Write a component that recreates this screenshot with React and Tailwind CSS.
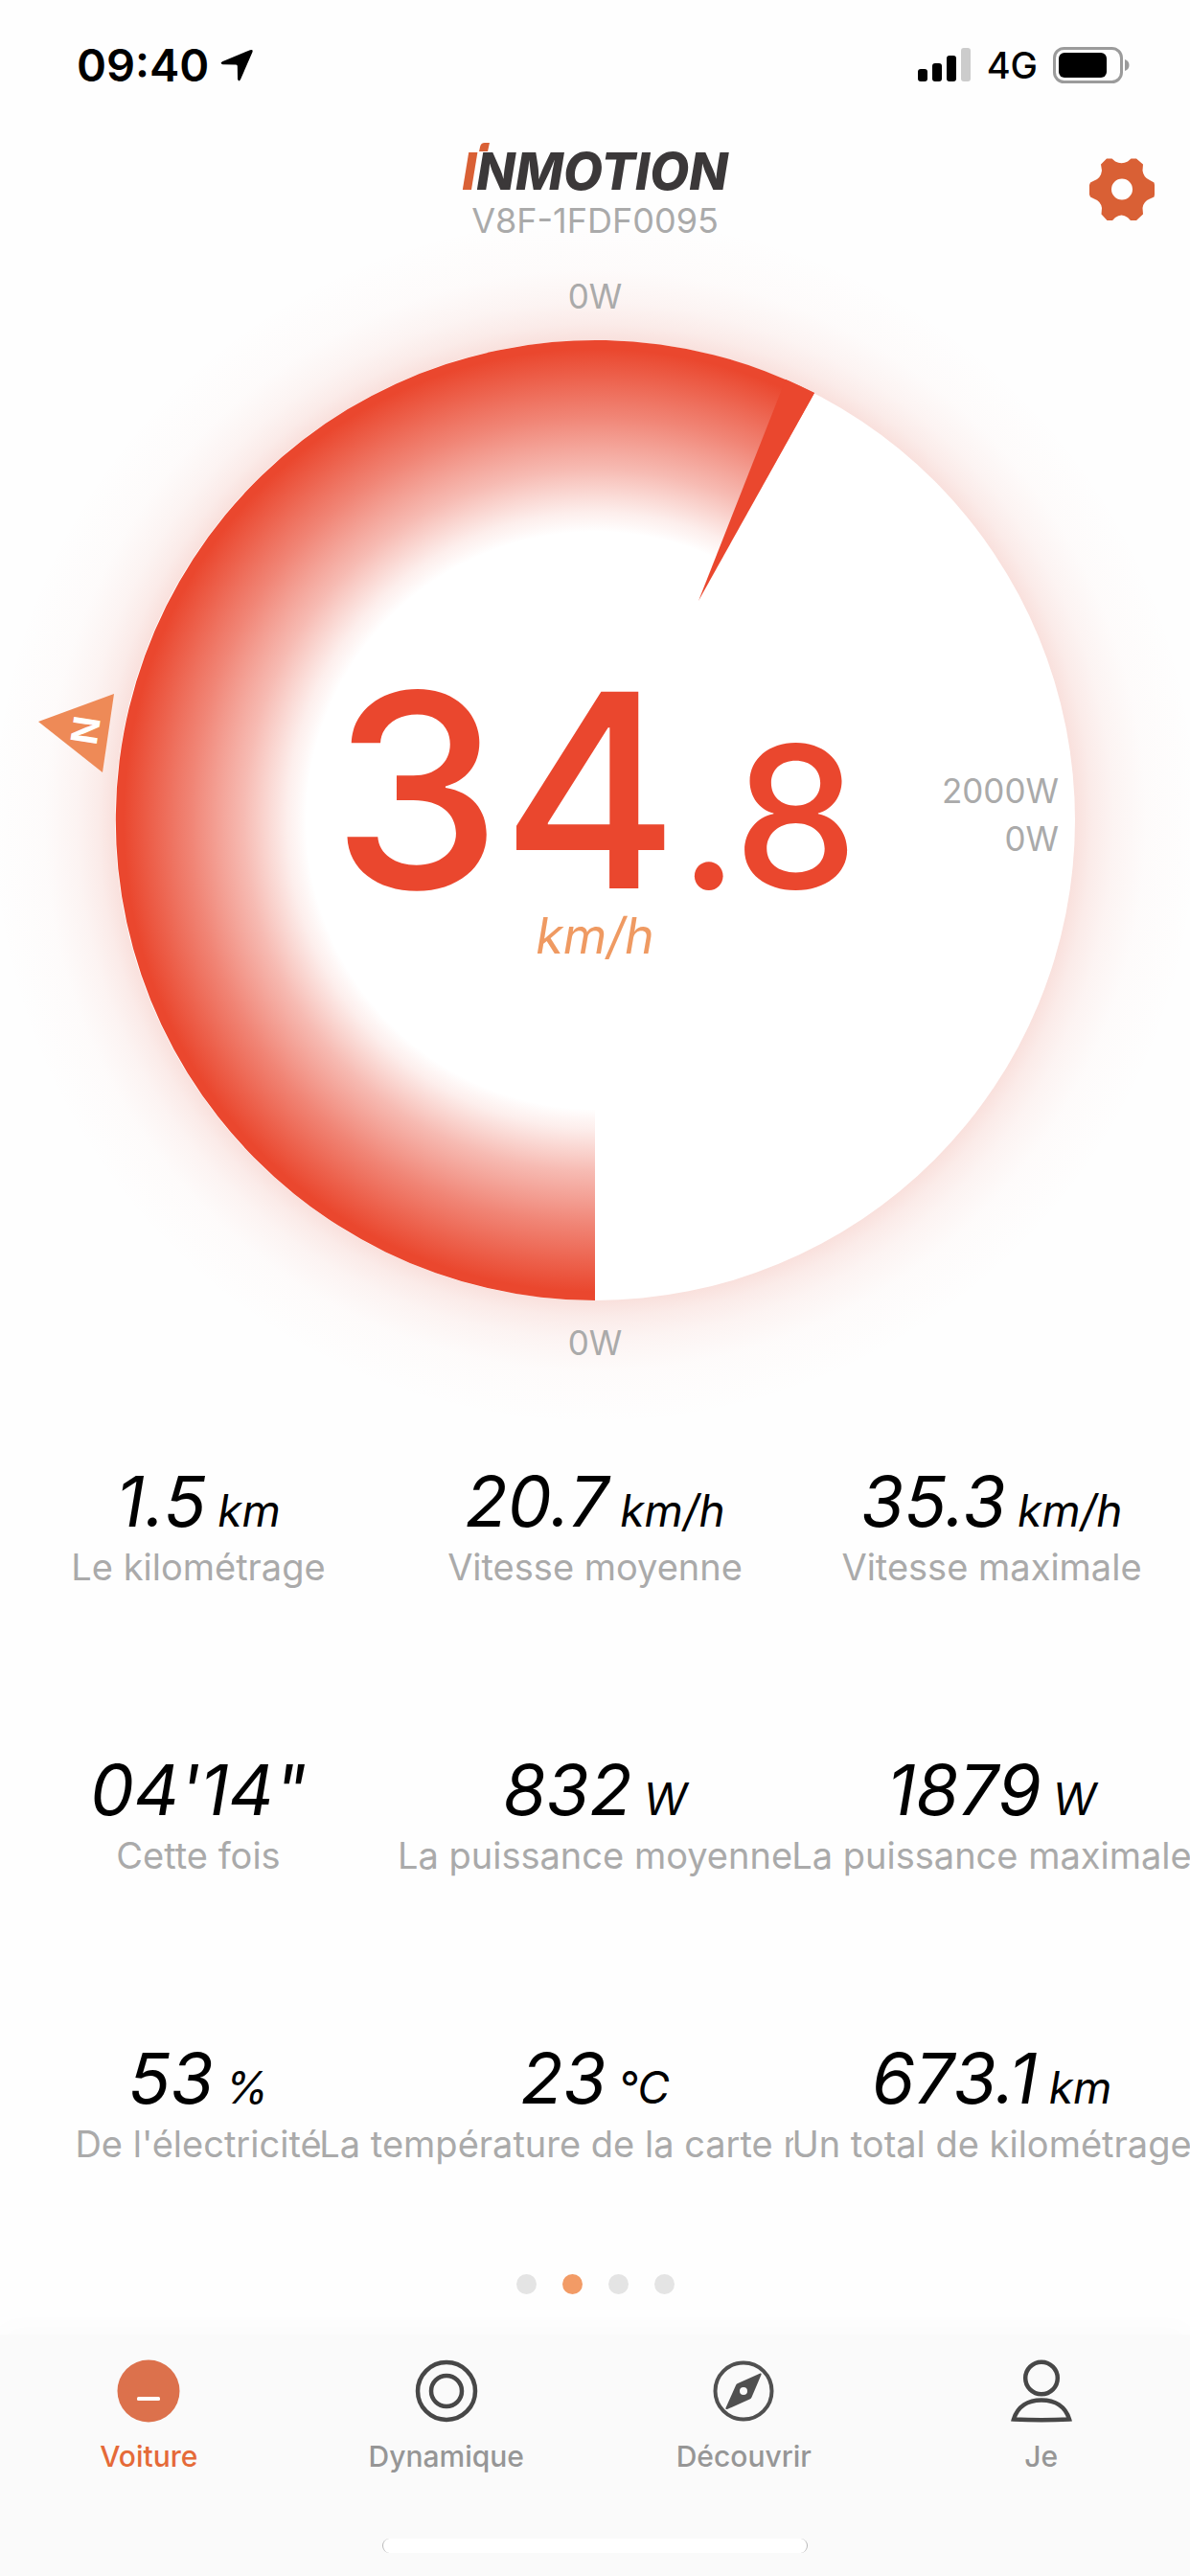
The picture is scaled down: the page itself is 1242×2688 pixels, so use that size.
import React from "react";

const STATS = [
  { value: "1.5", unit: "km", label: "Le kilométrage" },
  { value: "20.7", unit: "km/h", label: "Vitesse moyenne" },
  { value: "35.3", unit: "km/h", label: "Vitesse maximale" },
  { value: "04'14\"", unit: "", label: "Cette fois" },
  { value: "832", unit: "W", label: "La puissance moyenne" },
  { value: "1879", unit: "W", label: "La puissance maximale" },
  { value: "53", unit: "%", label: "De l'électricité" },
  { value: "23", unit: "°C", label: "La température de la carte mère" },
  { value: "673.1", unit: "km", label: "Un total de kilométrage" },
];

function StatusBar() {
  return (
    <div className="flex h-[132px] items-center justify-between pt-1 pr-[63px] pl-20 text-black">
      <div className="flex items-center gap-3">
        <span className="text-[47px] leading-[56px] font-semibold">09:40</span>
        <svg viewBox="0 0 34 34" className="size-[34px]" aria-label="Localisation">
          <path
            d="M31 1.200 Q34.500 0 33.400 3.500 L21 32 Q19 35 18 31.600 L17.800 18 Q17.800 16.500 16.300 16.500 L2.400 16.200 Q-1 15.200 2 13.200 Z"
            fill="#000"
          />
        </svg>
      </div>
      <div className="flex items-center gap-4">
        <svg viewBox="0 0 56 36" className="h-9 w-14" aria-label="Réseau">
          <rect x="0" y="22" width="10" height="13" rx="3" />
          <rect x="15" y="16" width="10" height="19" rx="3" />
          <rect x="30" y="8" width="10" height="27" rx="3" />
          <rect x="45" y="0" width="10" height="35" rx="3" fill="#cccccc" />
        </svg>
        <span className="text-[38px] leading-[44px] font-medium">4G</span>
        <svg viewBox="0 0 80 38" className="h-[38px] w-20" aria-label="Batterie">
          <rect x="1.5" y="1.5" width="70" height="35" rx="10" fill="none" stroke="#9b9b9b" strokeWidth="3" />
          <rect x="6" y="6" width="50" height="26" rx="6" />
          <path d="M75 13 Q79.500 14.500 79.500 19 Q79.500 23.500 75 25 Z" fill="#9b9b9b" />
        </svg>
      </div>
    </div>
  );
}

function Header() {
  return (
    <header className="relative z-10 grid grid-cols-[1fr_auto_1fr] items-start px-9">
      <span />
      <div className="flex flex-col items-center pt-[15px]">
        <h1 className="relative text-[53px] leading-[64px] font-extrabold text-[#3b3839] italic" aria-label="INMOTION">
          <span className="text-[#d96035]">I</span>NMOTION
          <span className="absolute top-[2px] left-[19px] h-[9px] w-[9px] -skew-x-12 rounded-tl-sm bg-[#d96035]" />
        </h1>
        <p className="text-[36px] leading-[38px] text-[#aaaaaa]">V8F-1FDF0095</p>
      </div>
      <button type="button" aria-label="Réglages" className="mt-[33px] justify-self-end">
        <svg viewBox="0 0 70 66" className="h-[66px] w-[70px]">
          <path
            fillRule="evenodd"
            fill="#d96035"
            d="M19 0.500 H24.500 L28 3.500 Q34.500 7 41 3.500 L44.500 0.500 H50 L57 6.500 L56.500 13 Q57.500 20.500 64 23 L68.500 25.500 L69 28 V38 L68.500 40.500 L64 42.500 Q57.500 45 56.500 52 L57 58.500 L50 65 H44 L41 62 Q34.500 57 28 62 L25 65 H19.500 L13.500 58.500 L14 52 Q13 45 6 42.500 L2 40.500 L1 38 V28 L2 25.500 L6 23.500 Q13 21 14 13 L13 6.500 Z M35 21.500 A11 11 0 1 0 35 43.500 A11 11 0 1 0 35 21.500 Z"
          />
        </svg>
      </button>
    </header>
  );
}

function Dial() {
  return (
    <section className="flex flex-col items-center text-[35px] leading-10 text-[#aaaaaa]">
      <p className="relative z-10 mt-[40px]">0W</p>
      <div className="relative mt-[25px] w-full">
        <svg viewBox="0 0 1242 1004" className="block w-full overflow-visible" aria-hidden="true">
          <defs>
            <radialGradient id="fill" gradientUnits="userSpaceOnUse" cx="621" cy="502" r="502">
              <stop offset="0.6" stopColor="#ea472e" stopOpacity="0" />
              <stop offset="0.64" stopColor="#ea5a45" stopOpacity="0.1" />
              <stop offset="0.73" stopColor="#ea5440" stopOpacity="0.4" />
              <stop offset="0.84" stopColor="#ea4e38" stopOpacity="0.69" />
              <stop offset="0.92" stopColor="#ea4a32" stopOpacity="0.87" />
              <stop offset="0.98" stopColor="#ea472e" />
            </radialGradient>
            <radialGradient id="glow" gradientUnits="userSpaceOnUse" cx="621" cy="502" r="632">
              <stop offset="0.79" stopColor="#e2543e" stopOpacity="0.18" />
              <stop offset="0.82" stopColor="#e2543e" stopOpacity="0.11" />
              <stop offset="0.856" stopColor="#e2543e" stopOpacity="0.06" />
              <stop offset="0.91" stopColor="#e2543e" stopOpacity="0.018" />
              <stop offset="1" stopColor="#e2543e" stopOpacity="0" />
            </radialGradient>
          </defs>
          <circle cx="621" cy="502" r="632" fill="url(#glow)" />
          <circle cx="621" cy="502" r="501" fill="#ffffff" />
          <path d="M621 502 V1003 A501 501 0 1 1 850 56 L729 273 Z" fill="url(#fill)" />
          <path d="M729 273 L820 42 A501 501 0 0 1 850 56 Z" fill="#ea472e" />
          <path d="M40 399 L119 370 L107 452 Z" fill="#ee8a57" />
          <text
            x="89"
            y="408"
            transform="rotate(-81 89 408)"
            textAnchor="middle"
            dominantBaseline="central"
            fontSize="38"
            fontWeight="700"
            fill="#ffffff"
          >
            N
          </text>
        </svg>
        <div className="absolute inset-0 flex flex-col items-center justify-center pb-[10px]">
          <p className="text-[282px] leading-[260px] font-medium text-[#ea472e]">
            34<span className="text-[206px] leading-none">.8</span>
          </p>
          <p className="-mt-2 text-[52px] leading-[60px] text-[#ef9a62] italic">km/h</p>
        </div>
        <div className="absolute inset-y-0 right-[137px] flex flex-col items-end justify-center gap-[10px] pb-3">
          <span>2000W</span>
          <span>0W</span>
        </div>
      </div>
      <p className="relative z-10 mt-[23px]">0W</p>
    </section>
  );
}

function Stat({ value, unit, label }) {
  return (
    <div className="flex h-[301px] flex-col items-center bg-[#fefefe]">
      <dd className="order-1 text-[73px] leading-[88px] whitespace-nowrap text-black italic">
        {value}
        {unit && <span className="ml-3 text-[46px] leading-none">{unit}</span>}
      </dd>
      <dt className="order-2 text-[38px] leading-[48px] whitespace-nowrap text-[#aaaaaa]">{label}</dt>
    </div>
  );
}

function CarIcon() {
  return (
    <svg viewBox="0 0 66 66" className="size-[66px]">
      <circle cx="33" cy="33" r="32.500" fill="#dc714c" />
      <rect x="21" y="39" width="24" height="4" rx="1.500" fill="#fff" />
    </svg>
  );
}

function RingIcon() {
  return (
    <svg viewBox="0 0 66 66" className="size-[66px]" fill="none" stroke="#474747" strokeWidth="4.5">
      <circle cx="33" cy="33" r="30" />
      <circle cx="33" cy="33" r="16" />
    </svg>
  );
}

function CompassIcon() {
  return (
    <svg viewBox="0 0 66 66" className="size-[66px]">
      <circle cx="33" cy="33" r="29.500" fill="none" stroke="#505050" strokeWidth="4" />
      <path
        fillRule="evenodd"
        fill="#505050"
        d="M50.500 14.500 Q52 14 51.500 16 L41.500 39.500 Q41 41 39.500 41.500 L16 52 Q14 52.500 14.500 50.500 L25 27 Q25.500 25.500 27 25 Z M33 29 A4 4 0 1 0 33 37 A4 4 0 1 0 33 29 Z"
      />
    </svg>
  );
}

function PersonIcon() {
  return (
    <svg viewBox="0 0 66 66" className="size-[66px]" fill="none" stroke="#474747" strokeWidth="4.5">
      <circle cx="33" cy="19.500" r="16.800" />
      <path d="M4 62.500 C8 49 19 42.500 33 42.500 S58 49 62 62.500 Q33 64 4 62.500 Z" />
    </svg>
  );
}

const TABS = [
  { label: "Voiture", Icon: CarIcon, active: true },
  { label: "Dynamique", Icon: RingIcon },
  { label: "Découvrir", Icon: CompassIcon },
  { label: "Je", Icon: PersonIcon },
];

function TabBar() {
  return (
    <nav className="mt-auto flex flex-col items-center bg-[#fafafa] pb-6 shadow-[0_-8px_28px_rgba(0,0,0,0.015)]">
      <div className="grid w-full grid-cols-4">
        {TABS.map(({ label, Icon, active }) => (
          <button
            key={label}
            type="button"
            aria-current={active ? "page" : undefined}
            className={`flex flex-col items-center gap-[17px] pt-[26px] text-[30px] leading-9 font-medium ${active ? "text-[#e56a38]" : "text-[#969696]"}`}
          >
            <Icon />
            {label}
          </button>
        ))}
      </div>
      <div className="mt-[68px] h-[15px] w-[444px] rounded-full border-x border-[#b8b8b8] bg-white" />
    </nav>
  );
}

export default function App() {
  return (
    <main className="flex min-h-screen flex-col overflow-hidden bg-[#fefefe] font-['Inter','Liberation_Sans',sans-serif]">
      <StatusBar />
      <Header />
      <Dial />
      <dl className="mt-[102px] grid grid-cols-3">
        {STATS.map((s) => (
          <Stat key={s.label} {...s} />
        ))}
      </dl>
      <div className="-mt-[53px] flex justify-center gap-[27px]">
        {[0, 1, 2, 3].map((i) => (
          <button
            key={i}
            type="button"
            aria-label={`Page ${i + 1}`}
            className={`size-[21px] rounded-full ${i === 1 ? "bg-[#f29b66]" : "bg-[#e4e4e4]"}`}
          />
        ))}
      </div>
      <TabBar />
    </main>
  );
}
